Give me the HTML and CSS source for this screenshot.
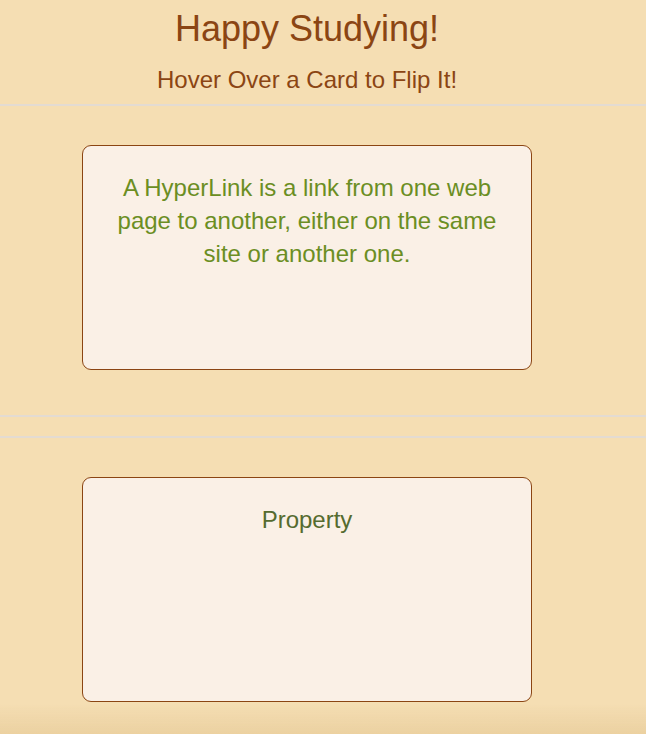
FILE: index.html
```html
<!DOCTYPE html>
<html lang="en">
<head>
<meta charset="utf-8">
<title>Happy Studying!</title>
<link rel="stylesheet" href="styles.css">
</head>
<body>
<header class="page-header">
  <h1 class="title">Happy Studying!</h1>
  <h2 class="subtitle">Hover Over a Card to Flip It!</h2>
</header>
<hr class="rule rule-top">
<section class="deck deck-first">
  <div class="card">
    <p class="card-text card-back">A HyperLink is a link from one web page to another, either on the same site or another one.</p>
  </div>
</section>
<hr class="rule">
<hr class="rule rule-second">
<section class="deck">
  <div class="card">
    <p class="card-text card-front">Property</p>
  </div>
</section>
<div class="bottom-fade"></div>
</body>
</html>
```

FILE: styles.css
```css
html, body {
  margin: 0;
  padding: 0;
}

body {
  background: #f5deb3;
  font-family: "Liberation Sans", Arial, Helvetica, sans-serif;
  color: #8b4513;
  min-height: 734px;
}

.page-header {
  width: 614px;
  text-align: center;
  padding-top: 9px;
}

.title {
  margin: 0;
  font-size: 36px;
  line-height: 40px;
  font-weight: normal;
  color: #8b4513;
}

.subtitle {
  margin: 18px 0 0;
  font-size: 24px;
  line-height: 26px;
  font-weight: normal;
  color: #8b4513;
}

.rule {
  display: block;
  margin: 0;
  border: 0;
  height: 2px;
  background: #e3dbd2;
}

.rule-top {
  margin-top: 11px;
}

.rule-second {
  margin-top: 19px;
}

.deck {
  width: 614px;
  display: flex;
  justify-content: center;
  padding: 39px 0 45px;
}

.card {
  box-sizing: border-box;
  width: 450px;
  height: 225px;
  background: #faf0e6;
  border: 1px solid #8b4513;
  border-radius: 9px;
  padding: 25px 30px 0;
  text-align: center;
}

.card-text {
  margin: 0;
  font-size: 24px;
  line-height: 33px;
}

.card-back {
  color: #6b8e23;
}

.card-front {
  color: #556b2f;
}

.bottom-fade {
  position: fixed;
  left: 0;
  right: 0;
  bottom: 0;
  height: 30px;
  pointer-events: none;
  background: linear-gradient(to bottom, rgba(214, 180, 120, 0), rgba(214, 180, 120, 0.3));
}
```
